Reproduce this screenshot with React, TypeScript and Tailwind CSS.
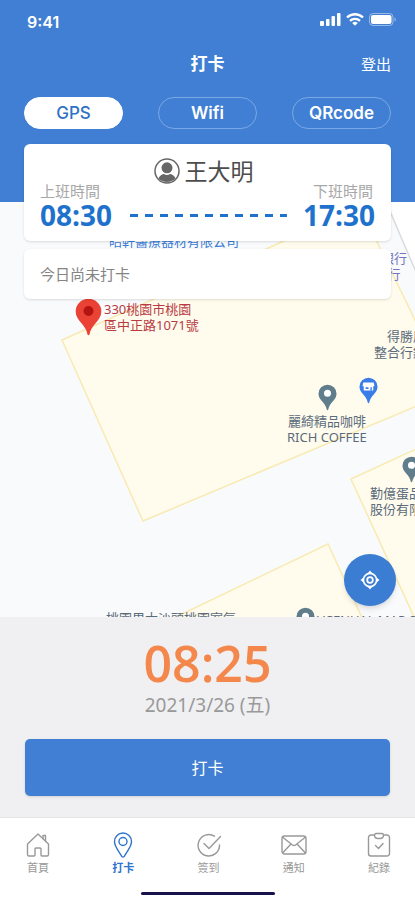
import type { ReactNode } from "react";

const tabs = [
  { label: "GPS", active: true },
  { label: "Wifi", active: false },
  { label: "QRcode", active: false },
];

function StatusBar() {
  return (
    <div className="flex h-11 items-center justify-between pr-[18px] pl-[27px]">
      <span className="font-['Inter',sans-serif] text-base font-semibold">9:41</span>
      <div className="flex items-center gap-[5px] pb-[5px]">
        <svg width="21" height="13" viewBox="0 0 21 13" fill="currentColor" aria-hidden="true">
          <rect x="0" y="8" width="4" height="5" rx="1" />
          <rect x="6" y="6" width="3.5" height="7" rx="1" />
          <rect x="11.5" y="3" width="3.5" height="10" rx="1" />
          <rect x="17" y="0" width="3.5" height="13" rx="1" />
        </svg>
        <svg width="18" height="13" viewBox="0 0 18 13" fill="none" stroke="currentColor" strokeWidth="2.3" aria-hidden="true">
          <path d="M1 4.5a11.5 11.5 0 0 1 16 0" />
          <path d="M4 7.9a7.2 7.2 0 0 1 10 0" />
          <path d="M6.2 10a4 4 0 0 1 5.6 0L9 12.8z" fill="currentColor" stroke="none" />
        </svg>
        <svg width="28" height="13" viewBox="0 0 28 13" aria-hidden="true">
          <rect x="0.5" y="0.5" width="23.5" height="12" rx="3.5" fill="none" stroke="currentColor" opacity="0.45" />
          <rect x="2" y="2" width="20.5" height="9" rx="2" fill="currentColor" />
          <path d="M25.5 4.5v4a2.2 2.2 0 0 0 0-4z" fill="currentColor" opacity="0.5" />
        </svg>
      </div>
    </div>
  );
}

function Pin({ className, color, children }: { className: string; color: string; children: ReactNode }) {
  return (
    <svg className={`absolute ${className}`} viewBox="0 0 20 28" aria-hidden="true">
      <path
        d="M10 .5A9.500 9.500 0 0 0 .5 10c0 3.300 1.800 5.800 4 8.300 2.600 3 4.200 5.500 4.700 8.400.2 1 1.400 1 1.600 0 .5-2.900 2.100-5.400 4.700-8.400 2.200-2.500 4-5 4-8.300A9.500 9.500 0 0 0 10 .5z"
        fill={color}
      />
      {children}
    </svg>
  );
}

function Map() {
  return (
    <div className="absolute inset-0 overflow-hidden bg-[#f8fafc] text-[13px] leading-4 text-[#5b6b7a]">
      <svg className="size-full" viewBox="0 0 415 415" preserveAspectRatio="xMinYMin slice" aria-hidden="true">
        <path d="M388 0h30v78z" fill="#fff" />
        <path d="M386 0l36 84" stroke="#d9dbdd" strokeWidth="1.5" />
        <g fill="#fffcee" stroke="#f8eab0" strokeWidth="1.5">
          <path d="M62 138L360 5L450 190L143 319z" />
          <path d="M351 277L440 236V470L420 428z" />
          <path d="M180 413L328 342L364 420H180z" />
        </g>
      </svg>
      <span className="absolute top-[31px] left-[109px] whitespace-nowrap text-[#3a7bd5]">皓軒醫療器材有限公司</span>
      <span className="absolute top-[48px] left-[381px] w-[26px] text-center text-[#7573c0]">銀行<br />行</span>

      <Pin className="top-[96px] left-[75px] h-[38px] w-[27px]" color="#ea4335">
        <circle cx="10" cy="9.5" r="3.7" fill="#b31412" />
      </Pin>
      <span className="absolute top-[99px] left-[104px] whitespace-nowrap text-[#b93a42]">
        330桃園市桃園<br />區中正路1071號
      </span>

      <span className="absolute top-[126px] left-[374px] text-center whitespace-nowrap">得勝廣告<br />整合行銷公司</span>

      <Pin className="top-[181px] left-[318px] h-[29px] w-[19px]" color="#607d8b">
        <circle cx="10" cy="9.5" r="3.7" fill="#fff" />
      </Pin>
      <Pin className="top-[174px] left-[359px] h-[29px] w-[19px]" color="#3b7de8">
        <path d="M4.5 5.500h11l.8 4h-1.300V14H5V9.500H3.700z" fill="#fff" />
        <path d="M7 10.500h3v2H7zM12 10.500h1.500V14H12z" fill="#3b7de8" />
      </Pin>
      <span className="absolute top-[211px] left-[287px] text-center whitespace-nowrap">麗綺精品咖啡<br />RICH COFFEE</span>

      <Pin className="top-[253px] left-[402px] h-[29px] w-[19px]" color="#607d8b">
        <circle cx="10" cy="9.5" r="3.7" fill="#fff" />
      </Pin>
      <span className="absolute top-[283px] left-[370px] whitespace-nowrap">勤億蛋品科技<br />股份有限公司</span>

      <span className="absolute top-[408px] left-[106px] whitespace-nowrap">桃園里大沙頭桃園室氣</span>
      <Pin className="top-[404px] left-[296px] h-[29px] w-[19px]" color="#607d8b">
        <circle cx="10" cy="9.5" r="3.7" fill="#fff" />
      </Pin>
      <span className="absolute top-[410px] left-[317px] whitespace-nowrap">VCENUAL MAP SHOP</span>
    </div>
  );
}

function ShiftCard() {
  return (
    <section className="rounded-md bg-white px-4 pt-[15px] pb-[10px] shadow-sm">
      <h2 className="flex items-center justify-center gap-[5px] pr-2 text-[23px] leading-6 text-[#4d4d4d]">
        <svg className="-my-px" width="26" height="26" viewBox="0 0 26 26" fill="none" aria-hidden="true">
          <circle cx="13" cy="13" r="12" stroke="#666" strokeWidth="1.5" />
          <circle cx="13" cy="9.8" r="5.5" fill="#666" />
          <path d="M4.500 20.200c1.500-3 4-4.200 5.500-4.200 2 1.200 4 1.200 6 0 1.500 0 4 1.200 5.500 4.200a11.200 11.200 0 0 1-17 0z" fill="#666" />
        </svg>
        王大明
      </h2>
      <div className="flex justify-between pr-[2px] text-[15px] leading-4 text-[#a8a8a8]">
        <span>上班時間</span>
        <span>下班時間</span>
      </div>
      <div className="flex items-center justify-between font-['Open_Sans',sans-serif] text-[28px] leading-8 font-bold text-[#1e72cc]">
        <time>08:30</time>
        <svg className="mr-4 ml-[18px] h-[3px] min-w-0 flex-1" aria-hidden="true">
          <line x1="0" y1="1.5" x2="100%" y2="1.5" stroke="currentColor" strokeWidth="3" strokeDasharray="8 7" />
        </svg>
        <time>17:30</time>
      </div>
    </section>
  );
}

const iconProps = {
  width: 26,
  height: 26,
  viewBox: "0 0 26 26",
  fill: "none",
  stroke: "currentColor",
  strokeWidth: 1.4,
  strokeLinecap: "round",
  strokeLinejoin: "round",
  "aria-hidden": true,
} as const;

const navItems = [
  {
    label: "首頁",
    active: false,
    icon: (
      <svg {...iconProps}>
        <path d="M2.5 12v10.500A1.500 1.500 0 0 0 4 24h5a1 1 0 0 0 1-1v-6a1 1 0 0 1 1-1h4a1 1 0 0 1 1 1v6a1 1 0 0 0 1 1h5a1.500 1.500 0 0 0 1.500-1.500V12L13 2z" />
        <path d="M18 6.500V3.500h2.500V9" />
      </svg>
    ),
  },
  {
    label: "打卡",
    active: true,
    icon: (
      <svg {...iconProps}>
        <path d="M13 1a8.500 8.500 0 0 0-8.500 8.500c0 5 4 9 6.800 14.200.8 1.700 2.600 1.700 3.400 0C17.500 18.500 21.500 14.500 21.500 9.500A8.500 8.500 0 0 0 13 1z" />
        <circle cx="13" cy="9.5" r="4" />
      </svg>
    ),
  },
  {
    label: "簽到",
    active: false,
    icon: (
      <svg {...iconProps}>
        <path d="M18.500 4.200A10.700 10.700 0 1 0 23.500 13" />
        <path d="M8 11.500l5 5L24.500 4.500" />
      </svg>
    ),
  },
  {
    label: "通知",
    active: false,
    icon: (
      <svg {...iconProps}>
        <rect x="1" y="4" width="24" height="18" rx="2.5" />
        <path d="M2 5.500l9.500 7.500a2.500 2.500 0 0 0 3 0L24 5.500M2 20.500l7.500-8M24 20.500l-7.500-8" />
      </svg>
    ),
  },
  {
    label: "紀錄",
    active: false,
    icon: (
      <svg {...iconProps}>
        <path d="M8.500 3H5a2.500 2.500 0 0 0-2.500 2.500v16A2.500 2.500 0 0 0 5 24h16a2.500 2.500 0 0 0 2.500-2.500v-16A2.500 2.500 0 0 0 21 3h-3.500" />
        <path d="M10 1.500h6a1.500 1.500 0 0 1 1.500 1.500c0 2-1.500 3.500-3.500 3.500h-2c-2 0-3.500-1.500-3.500-3.500A1.500 1.500 0 0 1 10 1.500z" />
        <path d="M9.500 13.500l3 3 4.500-5" />
      </svg>
    ),
  },
];

export default function App() {
  return (
    <div className="flex min-h-screen flex-col bg-white font-['Noto_Sans','Noto_Sans_CJK_TC',sans-serif]">
      <header className="bg-[#407fd3] pb-[73px] text-white">
        <StatusBar />
        <div className="grid h-10 grid-cols-3 items-center px-6">
          <h1 className="col-start-2 text-center text-[17px] font-bold">打卡</h1>
          <button type="button" className="justify-self-end text-[15px]">登出</button>
        </div>
        <div className="mt-[13px] flex justify-between px-6">
          {tabs.map((tab) => (
            <button
              key={tab.label}
              type="button"
              className={`h-8 w-[99px] rounded-full border font-['Inter',sans-serif] text-[17px] leading-5 ${
                tab.active
                  ? "border-white bg-white font-medium text-[#2f72c4]"
                  : "border-[#79a8e5] font-semibold text-white"
              }`}
            >
              {tab.label}
            </button>
          ))}
        </div>
      </header>

      <main className="relative flex flex-1 flex-col">
        <Map />
        <div className="relative z-10 -mt-[58px] flex flex-col gap-2 px-6">
          <ShiftCard />
          <p className="rounded-md bg-white px-4 py-[15px] text-[15px] leading-5 text-[#858585] shadow-sm">今日尚未打卡</p>
        </div>
        <button
          type="button"
          aria-label="定位"
          className="absolute right-[19px] bottom-[11px] flex size-[52px] items-center justify-center rounded-full bg-[#3b7dd2] text-white shadow-md"
        >
          <svg width="20" height="20" viewBox="0 0 20 20" fill="none" stroke="currentColor" strokeWidth="1.6" aria-hidden="true">
            <circle cx="10" cy="10" r="6.600" />
            <circle cx="10" cy="10" r="2.8" strokeWidth="1.8" />
            <path d="M10 .5L12.500 3.500h-5zM10 19.500l2.500-3h-5zM.5 10l3-2.500v5zM19.500 10l-3-2.500v5z" fill="currentColor" stroke="none" />
          </svg>
        </button>
      </main>

      <section className="bg-[#f0f0f2] px-[25px] pt-4 pb-[21px] text-center">
        <time className="block font-['Open_Sans',sans-serif] text-[50px] leading-[60px] font-semibold text-[#f4874b]">08:25</time>
        <p className="text-[19px] leading-6 text-[#999]">2021/3/26 (五)</p>
        <button type="button" className="mt-[22px] h-[57px] w-full rounded-[5px] bg-[#407fd3] text-base text-white shadow-sm">
          打卡
        </button>
      </section>

      <nav className="border-t border-[#e6e6e8] bg-white pt-[14px] pb-[5px]">
        <div className="flex justify-between pr-5 pl-[22px]">
          {navItems.map((item) => (
            <a
              key={item.label}
              href="#"
              className={`flex w-8 flex-col items-center gap-[2px] text-[11px] leading-4 ${
                item.active ? "font-bold text-[#2f74cf]" : "text-[#999]"
              }`}
            >
              {item.icon}
              {item.label}
            </a>
          ))}
        </div>
        <div className="mx-auto mt-4 h-[3px] w-[134px] rounded-full bg-[#17124a]" />
      </nav>
    </div>
  );
}
